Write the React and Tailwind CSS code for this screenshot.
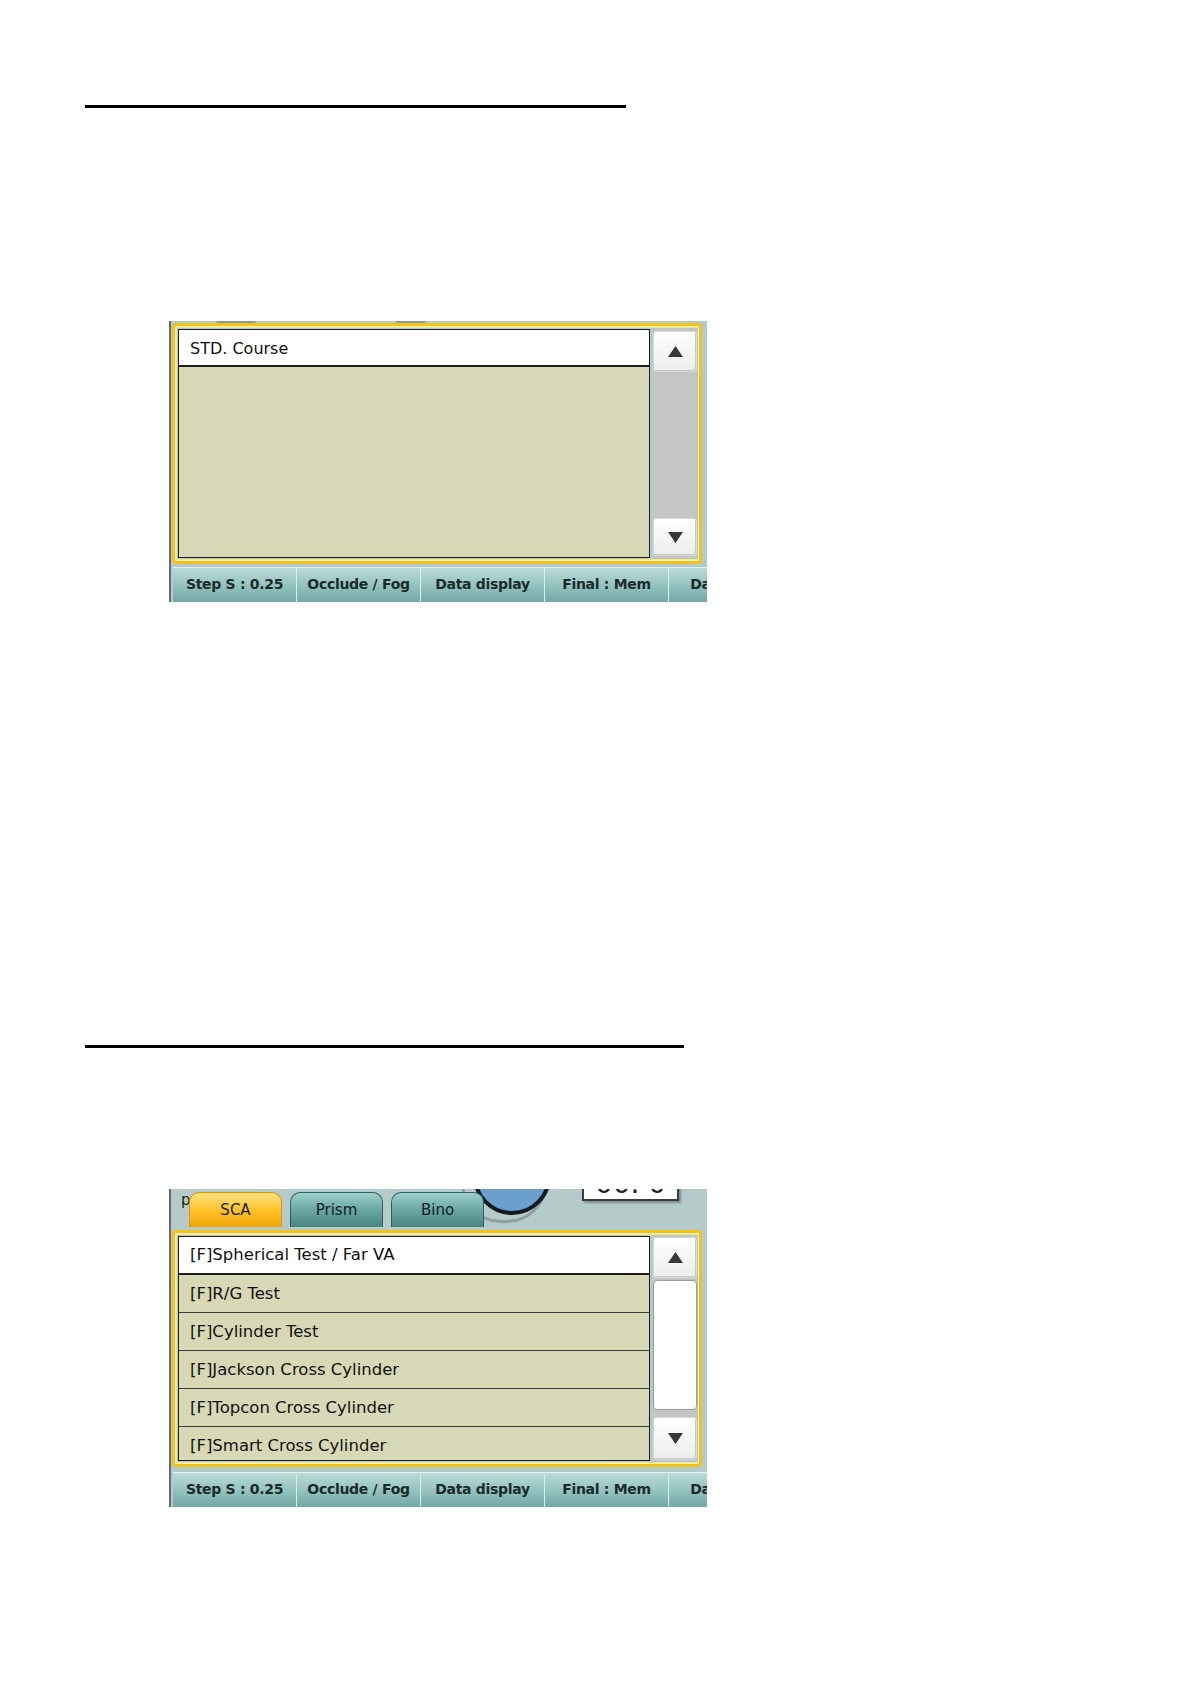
import React from 'react';

const toolbarItems = ['Step S : 0.25', 'Occlude / Fog', 'Data display', 'Final : Mem', 'Data input'];

const tests = [
  '[F]Spherical Test / Far VA',
  '[F]R/G Test',
  '[F]Cylinder Test',
  '[F]Jackson Cross Cylinder',
  '[F]Topcon Cross Cylinder',
  '[F]Smart Cross Cylinder',
];

function Triangle({ up }) {
  return (
    <svg width="17" height="13" viewBox="0 0 17 13">
      {up ? <path d="M8.5 1 L16 12 L1 12 Z" fill="#383838" /> : <path d="M1 1 L16 1 L8.5 12 Z" fill="#383838" />}
    </svg>
  );
}

function ScrollButton({ up, className = '' }) {
  return (
    <div
      className={`flex items-center justify-center rounded-[3px] border border-[#d8d8d8] bg-gradient-to-b from-[#ffffff] to-[#ececec] shadow-[inset_-1px_-1px_0_#c8c8c8] ${className}`}
    >
      <Triangle up={up} />
    </div>
  );
}

function Toolbar() {
  return (
    <div className="flex h-[35px] overflow-hidden">
      {toolbarItems.map((t, i) => (
        <div
          key={t}
          className={`flex h-full w-[124px] shrink-0 items-center justify-center border-r border-[#d9ecea] bg-gradient-to-b from-[#bcdcd9] via-[#96c4c1] to-[#73a8a5] text-[14px] font-bold tracking-[-0.3px] text-[#1b2a2a] shadow-[inset_0_1px_0_#e2f2f0] ${
            i === 0 ? 'ml-[2px]' : ''
          }`}
        >
          <span className="whitespace-nowrap">{t}</span>
        </div>
      ))}
    </div>
  );
}

function CoursePanel() {
  return (
    <div className="relative flex h-[281px] w-[538px] flex-col border-l-2 border-[#6b6b6b] bg-[#b5cbc9]">
      {/* top strip with hints of the controls above */}
      <div className="relative h-[2px] overflow-hidden">
        <div className="absolute left-[45px] top-0 h-[2px] w-[40px] rounded-b-full bg-[#8a9a9a]" />
        <div className="absolute left-[225px] top-0 h-[2px] w-[30px] rounded-b-full bg-[#8a9a9a]" />
      </div>
      <div className="ml-[1px] mr-[5px] flex h-[241px] rounded-[4px] border-[3px] border-[#f3c31d] bg-[#fbe58a] p-[2px] shadow-[inset_0_0_0_1px_#fff2b8]">
        <div className="flex h-full flex-1 gap-[3px] bg-[#b5cbc9] p-[1px]">
          <div className="flex h-full w-[472px] flex-col border border-[#1e1e1e] bg-[#d7d8b5]">
            <div className="flex h-[37px] items-center border-b-2 border-[#1e1e1e] bg-white pl-[11px] pt-[2px] text-[16px] text-[#111]">
              STD. Course
            </div>
          </div>
          <div className="flex h-full w-[44px] flex-col bg-[#c3c6c2] py-[2px]">
            <ScrollButton up className="h-[41px]" />
            <div className="flex-1" />
            <ScrollButton className="h-[38px]" />
          </div>
        </div>
      </div>
      <div className="h-[3px]" />
      <Toolbar />
    </div>
  );
}

function Tab({ label, active, className = '' }) {
  return (
    <div
      className={`flex h-[35px] w-[93px] items-center justify-center rounded-t-[10px] border border-b-0 text-[15px] ${
        active
          ? 'border-[#d99a00] bg-gradient-to-b from-[#ffe27a] via-[#ffc22a] to-[#f1a400] text-[#222]'
          : 'border-[#2f5f5c] bg-gradient-to-b from-[#9ccfcb] via-[#6aa7a3] to-[#4a8581] text-[#10201f]'
      } ${className}`}
    >
      <span>{label}</span>
    </div>
  );
}

function TestPanel() {
  return (
    <div className="flex h-[318px] w-[538px] flex-col border-l-2 border-[#6b6b6b] bg-[#b5cbc9]">
      {/* header with tabs and clipped controls */}
      <div className="relative h-[42px] overflow-hidden">
        <span className="absolute left-[10px] top-[0px] text-[15px] text-[#222]">p</span>
        <div className="absolute left-[290px] top-[-46px] h-[80px] w-[86px] rounded-full border-[3px] border-[#8f9e9e] bg-transparent" />
        <div className="absolute left-[302px] top-[-52px] h-[78px] w-[78px] rounded-full border-[4px] border-[#151a22] bg-[#6b9fcc]" />
        <div className="absolute left-[411px] top-[-40px] flex h-[52px] w-[97px] items-end justify-center border-2 border-[#3b3b3b] bg-white text-[28px] leading-none text-[#222] shadow-[2px_2px_2px_#7d8b8b]">
          <span className="pb-[1px]">00. 0</span>
        </div>
        <div className="absolute bottom-[3px] left-[18px] flex gap-[8px]">
          <Tab label="SCA" active />
          <Tab label="Prism" />
          <Tab label="Bino" />
        </div>
      </div>
      <div className="ml-[1px] mr-[5px] flex h-[237px] rounded-[4px] border-[3px] border-[#f3c31d] bg-[#fbe58a] p-[2px] shadow-[inset_0_0_0_1px_#fff2b8]">
        <div className="flex h-full flex-1 gap-[3px] bg-[#b5cbc9] p-[1px]">
          <div className="flex h-full w-[472px] flex-col border border-[#1e1e1e] bg-[#d7d8b5]">
            {tests.map((t, i) => (
              <div
                key={t}
                className={`flex h-[38px] shrink-0 items-center pl-[11px] text-[16.5px] text-[#111] ${
                  i === 0
                    ? 'border-b-2 border-[#1e1e1e] bg-white'
                    : i < tests.length - 1
                    ? 'border-b border-[#3a3a3a]'
                    : ''
                }`}
              >
                {t}
              </div>
            ))}
          </div>
          <div className="flex h-full w-[44px] flex-col bg-[#c3c6c2] py-[1px]">
            <ScrollButton up className="h-[41px]" />
            <div className="mt-[2px] h-[130px] rounded-[4px] border border-[#9a9a9a] bg-white" />
            <div className="flex-1" />
            <ScrollButton className="h-[43px]" />
          </div>
        </div>
      </div>
      <div className="h-[5px]" />
      <Toolbar />
    </div>
  );
}

export default function App() {
  return (
    <div
      className="min-h-[1684px] w-[1190px] bg-white pl-[85px] pt-[105px]"
      style={{ fontFamily: '"DejaVu Sans", Verdana, sans-serif' }}
    >
      <div className="h-[3px] w-[541px] bg-black" />
      <div className="ml-[84px] mt-[213px]">
        <CoursePanel />
      </div>
      <div className="mt-[443px] h-[3px] w-[599px] bg-black" />
      <div className="ml-[84px] mt-[141px]">
        <TestPanel />
      </div>
    </div>
  );
}
